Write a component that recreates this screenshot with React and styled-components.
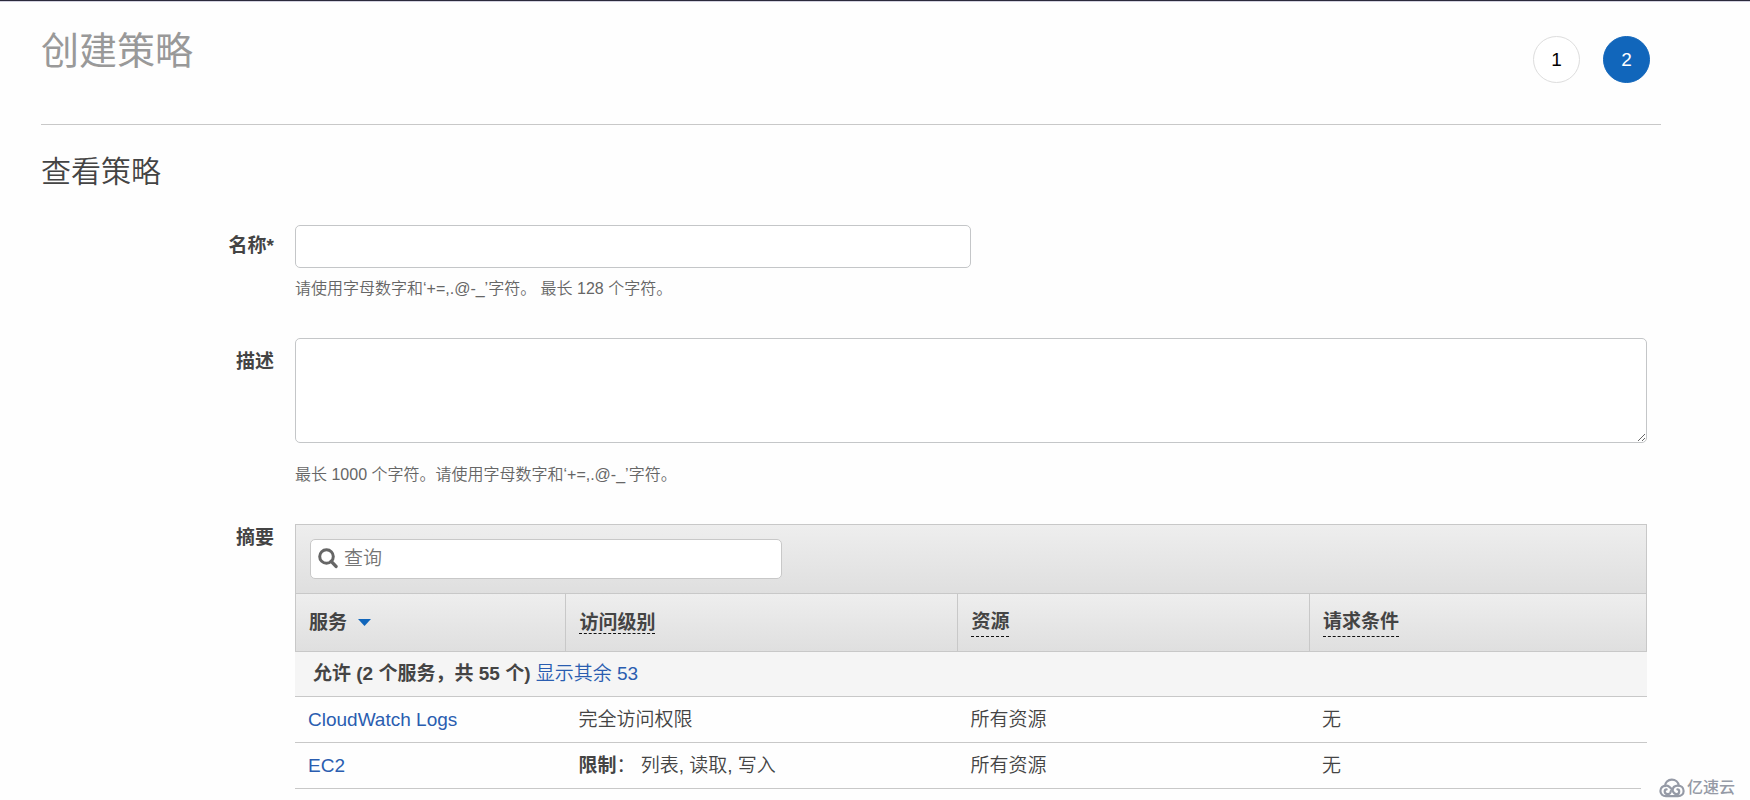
import React from "react";
import styled, { createGlobalStyle } from "styled-components";

const GlobalStyle = createGlobalStyle`
  *, *::before, *::after { box-sizing: border-box; }
  body {
    margin: 0;
    background: #fefefe;
    color: #444;
    font-family: "Liberation Sans", "Noto Sans CJK SC", sans-serif;
    font-size: 19px;
    font-weight: 350;
    line-height: 24px;
  }
  input, textarea, button { font: inherit; color: inherit; }
`;

const Page = styled.main`
  position: relative;
  min-height: 100vh;
  padding: 0 89px 0 41px;
  border-top: 1px solid #2b2a3c;
  box-shadow: inset 0 1px 0 #d3d2e0;
`;

const Header = styled.header`
  display: flex;
  justify-content: space-between;
  align-items: flex-start;
  padding: 26px 11px 41px 0;
  border-bottom: 1px solid #c8c8c8;
`;

const Title = styled.h1`
  margin: 0;
  font-size: 38px;
  line-height: 48px;
  font-weight: 400;
  color: #999;
`;

const Steps = styled.ol`
  display: flex;
  gap: 23px;
  margin: 9px 0 0;
  padding: 0;
  list-style: none;
`;

const Step = styled.li`
  display: flex;
  align-items: center;
  justify-content: center;
  width: 47px;
  height: 47px;
  border: 1px solid ${(p) => (p.$active ? "#1166bb" : "#ddd")};
  border-radius: 50%;
  background: ${(p) => (p.$active ? "#1166bb" : "#fff")};
  color: ${(p) => (p.$active ? "#fff" : "#000")};
`;

const SectionTitle = styled.h2`
  margin: 27px 0 33px;
  font-size: 30px;
  line-height: 40px;
  font-weight: 350;
`;

const Form = styled.form`
  display: flex;
  flex-direction: column;
  gap: 37px;
  padding-right: 14px;
`;

const FormRow = styled.div`
  display: grid;
  grid-template-columns: 233px minmax(0, 1fr);
  column-gap: 21px;
`;

const labelStyle = `
  font-weight: 700;
  text-align: right;
`;

const Label = styled.label`
  ${labelStyle}
  padding-top: ${(p) => p.$top}px;
`;

const GroupLabel = styled.span`
  ${labelStyle}
  padding-top: 2px;
`;

const Field = styled.div`
  display: flex;
  flex-direction: column;
`;

const TextInput = styled.input`
  width: 50%;
  height: 43px;
  padding: 8px;
  border: 1px solid #c4c6c8;
  border-radius: 5px;
  background: #fff;
`;

const TextArea = styled.textarea`
  display: block;
  width: 100%;
  height: 105px;
  padding: 8px;
  border: 1px solid #c4c6c8;
  border-radius: 5px;
  background: #fff;
  resize: vertical;
`;

const Hint = styled.p`
  margin: ${(p) => p.$gap}px 0 0;
  font-size: 16px;
  color: #666;
`;

const Toolbar = styled.div`
  padding: 14px;
  border: 1px solid #c8c8c8;
  border-bottom: 0;
  background: linear-gradient(#eee, #dfdfdf);
`;

const SearchBox = styled.label`
  display: flex;
  align-items: center;
  gap: 6px;
  width: 472px;
  max-width: 100%;
  height: 40px;
  padding: 0 7px;
  border: 1px solid #c8c8c8;
  border-radius: 5px;
  background: #fff;
`;

const SearchInput = styled.input`
  flex: 1;
  min-width: 0;
  padding: 0;
  border: 0;
  outline: 0;
  background: transparent;
  &::placeholder { color: #757575; opacity: 1; }
`;

const Table = styled.table`
  width: 100%;
  table-layout: fixed;
  border-collapse: separate;
  border-spacing: 0;
`;

const HeadCell = styled.th`
  width: ${(p) => p.$width};
  height: 59px;
  padding: 0 13px;
  text-align: left;
  border: 1px solid #c8c8c8;
  border-right-width: 0;
  background: linear-gradient(#eee, #dfdfdf);
  &:last-child { border-right-width: 1px; }
`;

const SortButton = styled.button`
  display: inline-flex;
  align-items: center;
  gap: 11px;
  padding: 0;
  border: 0;
  background: none;
  font-weight: 700;
  cursor: pointer;
`;

const Term = styled.span`
  display: inline-block;
  line-height: ${(p) => (p.$tight ? "20px" : "28px")};
  border-bottom: 1px dashed #111;
`;

const GroupCell = styled.th`
  height: 45px;
  padding: 0 18px;
  text-align: left;
  background: #f5f5f5;
  border-bottom: 1px solid #c8c8c8;
`;

const Cell = styled.td`
  height: 46px;
  padding: 0 13px;
  border-bottom: 1px solid #c8c8c8;
`;

const Link = styled.a`
  font-weight: 350;
  color: #2a5db0;
  text-decoration: none;
`;

const Watermark = styled.div`
  position: absolute;
  right: 0;
  bottom: 0;
  display: flex;
  align-items: center;
  gap: 2px;
  padding: 0 15px 0 18px;
  background: #fefefe;
  color: #959aa6;
  font-size: 16px;
  font-weight: 500;
`;

const SearchIcon = () => (
  <svg width="20" height="22" viewBox="0 0 20 22" fill="none" stroke="#666" aria-hidden="true">
    <circle cx="8.5" cy="8.5" r="6.8" strokeWidth="3" />
    <path d="M13.2 13.4 18 18.400" strokeWidth="3.4" strokeLinecap="round" />
  </svg>
);

const SortArrow = () => (
  <svg width="13" height="7" viewBox="0 0 13 7" aria-hidden="true">
    <path d="M0 0H13L6.5 7Z" fill="#1166bb" />
  </svg>
);

const CloudLogo = () => (
  <svg width="26" height="20" viewBox="0 0 26 20" fill="none" stroke="currentColor" strokeWidth="2.2" strokeLinecap="round" strokeLinejoin="round" aria-hidden="true">
    <path d="M6 8.2C6 4.4 9 1.6 12.8 1.6c3.7 0 6.600 2.500 6.900 5.800" />
    <path d="M13.600 12.800c0-3 2-5.200 5.400-5.200 3.200 0 5.600 2.200 5.600 5.400 0 3.200-2.400 5.200-5.600 5.200H7c-3.200 0-5.600-2.200-5.600-5.200C1.400 9.800 3.800 7.600 7 7.600c3.200 0 5 2.200 6.600 5.200 1 2.200 2 3.400 3.600 3.400 1.800 0 3-1.200 3-2.800 0-1.200-.8-2-1.800-2" />
    <path d="M7.600 11.400c-1.200 0-1.900.8-1.900 1.900 0 1.700 1.300 2.900 2.900 2.900 1.800 0 3.200-1.300 3.200-3" />
  </svg>
);

const rows = [
  { service: "CloudWatch Logs", access: "完全访问权限", resource: "所有资源", condition: "无" },
  { service: "EC2", limited: true, access: "列表, 读取, 写入", resource: "所有资源", condition: "无" },
];

export default function App() {
  return (
    <Page lang="zh-CN">
      <GlobalStyle />
      <Header>
        <Title>创建策略</Title>
        <Steps>
          <Step>1</Step>
          <Step $active aria-current="step">2</Step>
        </Steps>
      </Header>
      <SectionTitle>查看策略</SectionTitle>
      <Form onSubmit={(e) => e.preventDefault()}>
        <FormRow>
          <Label htmlFor="policy-name" $top={9}>名称*</Label>
          <Field>
            <TextInput id="policy-name" type="text" aria-describedby="name-hint" />
            <Hint id="name-hint" $gap={9}>请使用字母数字和‘+=,.@-_’字符。 最长 128 个字符。</Hint>
          </Field>
        </FormRow>
        <FormRow>
          <Label htmlFor="policy-description" $top={12}>描述</Label>
          <Field>
            <TextArea id="policy-description" aria-describedby="description-hint" />
            <Hint id="description-hint" $gap={20}>最长 1000 个字符。请使用字母数字和‘+=,.@-_’字符。</Hint>
          </Field>
        </FormRow>
        <FormRow>
          <GroupLabel id="summary-label">摘要</GroupLabel>
          <Field>
            <Toolbar>
              <SearchBox>
                <SearchIcon />
                <SearchInput type="text" placeholder="查询" aria-label="查询" />
              </SearchBox>
            </Toolbar>
            <Table aria-labelledby="summary-label">
              <thead>
                <tr>
                  <HeadCell $width="20%" scope="col">
                    <SortButton type="button">服务<SortArrow /></SortButton>
                  </HeadCell>
                  <HeadCell $width="29%" scope="col"><Term $tight>访问级别</Term></HeadCell>
                  <HeadCell $width="26%" scope="col"><Term>资源</Term></HeadCell>
                  <HeadCell $width="25%" scope="col"><Term>请求条件</Term></HeadCell>
                </tr>
              </thead>
              <tbody>
                <tr>
                  <GroupCell colSpan={4} scope="rowgroup">
                    允许 (2 个服务，共 55 个) <Link href="#all">显示其余 53</Link>
                  </GroupCell>
                </tr>
                {rows.map((row) => (
                  <tr key={row.service}>
                    <Cell><Link href="#service">{row.service}</Link></Cell>
                    <Cell>
                      {row.limited && <><strong>限制</strong>： </>}
                      {row.access}
                    </Cell>
                    <Cell>{row.resource}</Cell>
                    <Cell>{row.condition}</Cell>
                  </tr>
                ))}
              </tbody>
            </Table>
          </Field>
        </FormRow>
      </Form>
      <Watermark>
        <CloudLogo />
        亿速云
      </Watermark>
    </Page>
  );
}
